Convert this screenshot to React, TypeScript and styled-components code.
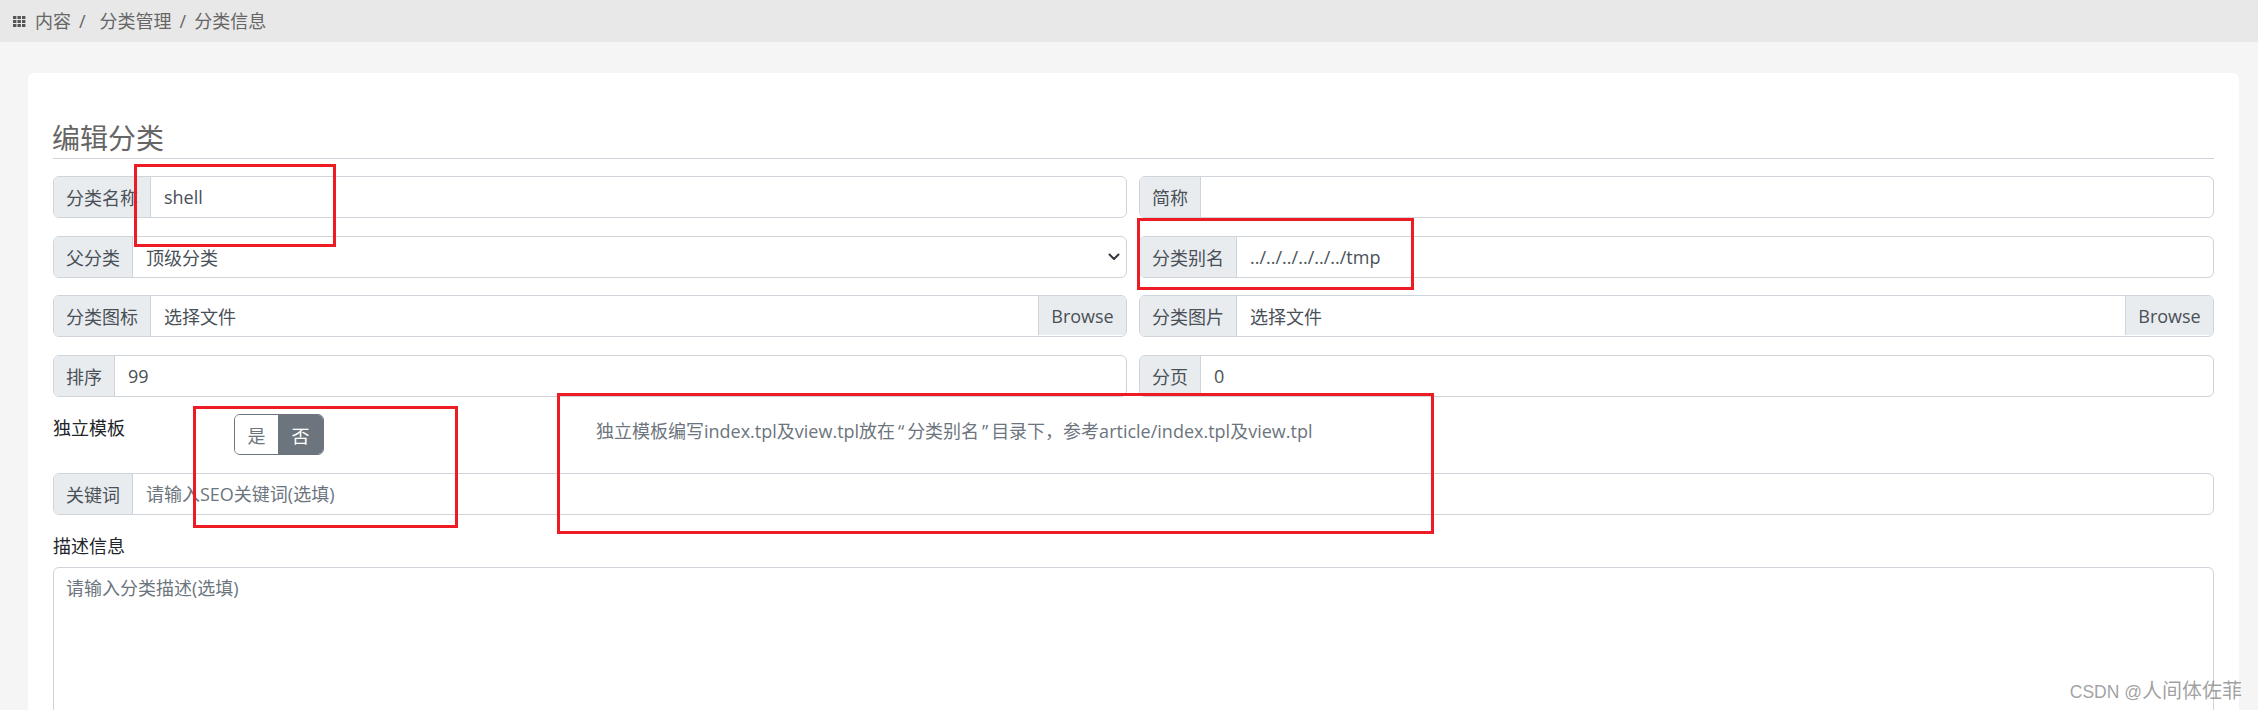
import React from "react";
import styled, { createGlobalStyle } from "styled-components";

const marks = [
  { id: "name", left: 134, top: 164, width: 202, height: 83 },
  { id: "alias", left: 1137, top: 218, width: 277, height: 72 },
  { id: "toggle", left: 193, top: 406, width: 265, height: 122 },
  { id: "hint", left: 557, top: 393, width: 877, height: 141 },
];

const App = () => {
  return (
    <Page>
      <GlobalStyle />
      <Breadcrumb>
        <GridIcon width="13" height="11" viewBox="0 0 13 11">
          {[0, 4.5, 9].map((x) =>
            [0, 4, 8].map((y) => <rect key={`${x}-${y}`} x={x} y={y} width="3.4" height="3" fill="#555" />)
          )}
        </GridIcon>
        <Crumb>内容</Crumb>
        <Slash $wide>/</Slash>
        <Crumb>分类管理</Crumb>
        <Slash>/</Slash>
        <Crumb>分类信息</Crumb>
      </Breadcrumb>

      <Content>
        <Card>
          <Title>编辑分类</Title>

          <FormGrid>
            <Group>
              <Addon>分类名称</Addon>
              <Field defaultValue="shell" readOnly />
            </Group>
            <Group>
              <Addon>简称</Addon>
              <Field readOnly />
            </Group>

            <Group>
              <Addon>父分类</Addon>
              <SelectBox>
                <span>顶级分类</span>
                <svg width="12" height="8" viewBox="0 0 12 8">
                  <path d="M1.5 1.5 L6 6 L10.5 1.5" fill="none" stroke="#343a40" strokeWidth="2" strokeLinecap="round" strokeLinejoin="round" />
                </svg>
              </SelectBox>
            </Group>
            <Group>
              <Addon>分类别名</Addon>
              <Field defaultValue="../../../../../../tmp" readOnly />
            </Group>

            <Group>
              <Addon>分类图标</Addon>
              <FileText>选择文件</FileText>
              <BrowseButton>Browse</BrowseButton>
            </Group>
            <Group>
              <Addon>分类图片</Addon>
              <FileText>选择文件</FileText>
              <BrowseButton>Browse</BrowseButton>
            </Group>

            <Group>
              <Addon>排序</Addon>
              <Field defaultValue="99" readOnly />
            </Group>
            <Group>
              <Addon>分页</Addon>
              <Field defaultValue="0" readOnly />
            </Group>
          </FormGrid>

          <ToggleRow>
            <RowLabel>独立模板</RowLabel>
            <Toggle>
              <ToggleOption>是</ToggleOption>
              <ToggleOption $active>否</ToggleOption>
            </Toggle>
            <Hint>
              独立模板编写index.tpl及view.tpl放在<Quote>“</Quote>分类别名<Quote>”</Quote>目录下，参考article/index.tpl及view.tpl
            </Hint>
          </ToggleRow>

          <Group>
            <Addon>关键词</Addon>
            <Field placeholder="请输入SEO关键词(选填)" readOnly />
          </Group>

          <DescLabel>描述信息</DescLabel>
          <TextArea placeholder="请输入分类描述(选填)" readOnly />
        </Card>
      </Content>

      {marks.map((m) => (
        <Mark key={m.id} style={{ left: m.left, top: m.top, width: m.width, height: m.height }} />
      ))}
      <Watermark>
        <WatermarkLatin>CSDN @</WatermarkLatin>人间体佐菲
      </Watermark>
    </Page>
  );
};

const GlobalStyle = createGlobalStyle`
  html, body {
    margin: 0;
    padding: 0;
    background: #f5f5f5;
  }
  * {
    box-sizing: border-box;
  }
`;

const fontStack = `"Open Sans", "Noto Sans CJK SC", sans-serif`;

const Page = styled.div`
  position: relative;
  width: 2258px;
  height: 710px;
  overflow: hidden;
  background: #f5f5f5;
  font-family: ${fontStack};
  font-size: 18px;
  color: #495057;
`;

const Breadcrumb = styled.div`
  display: flex;
  align-items: center;
  height: 42px;
  padding-left: 13px;
  background: #e8e8e8;
  color: #666;
`;

const GridIcon = styled.svg`
  margin-right: 9px;
`;

const Crumb = styled.span`
  line-height: 1;
`;

const Slash = styled.span<{ $wide?: boolean }>`
  margin: 0 ${(p) => (p.$wide ? "14px" : "8px")} 0 8px;
`;

const Content = styled.div`
  padding: 31px 19px 0 28px;
`;

const Card = styled.div`
  display: flex;
  flex-direction: column;
  height: 800px;
  padding: 46px 25px 0;
  background: #fff;
  border-radius: 6px;
`;

const Title = styled.h2`
  margin: 0 0 17px;
  height: 40px;
  font-size: 28px;
  font-weight: 400;
  line-height: 39px;
  color: #666;
  text-indent: -1px;
  border-bottom: 1px solid #ced4da;
`;

const FormGrid = styled.div`
  display: grid;
  grid-template-columns: 1074px 1075px;
  column-gap: 12px;
  row-gap: 17.5px;
`;

const Group = styled.div`
  display: flex;
  flex: none;
  height: 42px;
  background: #fff;
  border: 1px solid #ced4da;
  border-radius: 6px;
  overflow: hidden;
`;

const Addon = styled.div`
  display: flex;
  align-items: center;
  padding: 0 12px;
  background: #e9ecef;
  border-right: 1px solid #ced4da;
  white-space: nowrap;
`;

const Field = styled.input`
  flex: 1;
  min-width: 0;
  padding: 0 13px;
  border: 0;
  outline: 0;
  background: transparent;
  font: inherit;
  color: #495057;

  &::placeholder {
    color: #6c757d;
    opacity: 1;
  }
`;

const SelectBox = styled.div`
  flex: 1;
  display: flex;
  align-items: center;
  justify-content: space-between;
  padding: 0 6px 0 13px;
`;

const FileText = styled.div`
  flex: 1;
  display: flex;
  align-items: center;
  padding: 0 13px;
`;

const BrowseButton = styled.div`
  display: flex;
  align-items: center;
  justify-content: center;
  width: 88px;
  background: #e9ecef;
  border-left: 1px solid #ced4da;
  margin-bottom: 1px;
`;

const ToggleRow = styled.div`
  display: flex;
  flex: none;
  height: 42px;
  margin: 17.5px 0 17px;
`;

const RowLabel = styled.div`
  width: 181px;
  line-height: 28px;
  color: #212529;
`;

const Toggle = styled.div`
  display: flex;
  width: 90px;
  height: 41px;
  border: 1px solid #6c757d;
  border-radius: 6px;
  overflow: hidden;
`;

const ToggleOption = styled.div<{ $active?: boolean }>`
  flex: ${(p) => (p.$active ? "0 0 45px" : "1")};
  display: flex;
  align-items: center;
  justify-content: center;
  background: ${(p) => (p.$active ? "#6c757d" : "#fff")};
  color: ${(p) => (p.$active ? "#fff" : "#6c757d")};
`;

const Hint = styled.div`
  margin-left: 272px;
  line-height: 34px;
  color: #6c757d;
  white-space: nowrap;
`;

const Quote = styled.span`
  display: inline-block;
  width: 12px;
  text-align: center;
`;

const DescLabel = styled.div`
  margin-top: 19px;
  line-height: 24px;
  color: #212529;
`;

const TextArea = styled.textarea`
  flex: none;
  height: 240px;
  margin-top: 9px;
  padding: 6px 12px;
  border: 1px solid #ced4da;
  border-radius: 6px;
  outline: 0;
  resize: none;
  font: inherit;

  &::placeholder {
    color: #6c757d;
    opacity: 1;
  }
`;

const Mark = styled.div`
  position: absolute;
  border: 3px solid #ed1c24;
  pointer-events: none;
`;

const Watermark = styled.div`
  position: absolute;
  right: 16px;
  bottom: 4px;
  font-size: 20px;
  line-height: 28px;
  color: rgba(120, 120, 120, 0.7);
  white-space: nowrap;
`;

const WatermarkLatin = styled.span`
  font-family: "Liberation Sans", sans-serif;
  font-size: 17.5px;
`;

export default App;
